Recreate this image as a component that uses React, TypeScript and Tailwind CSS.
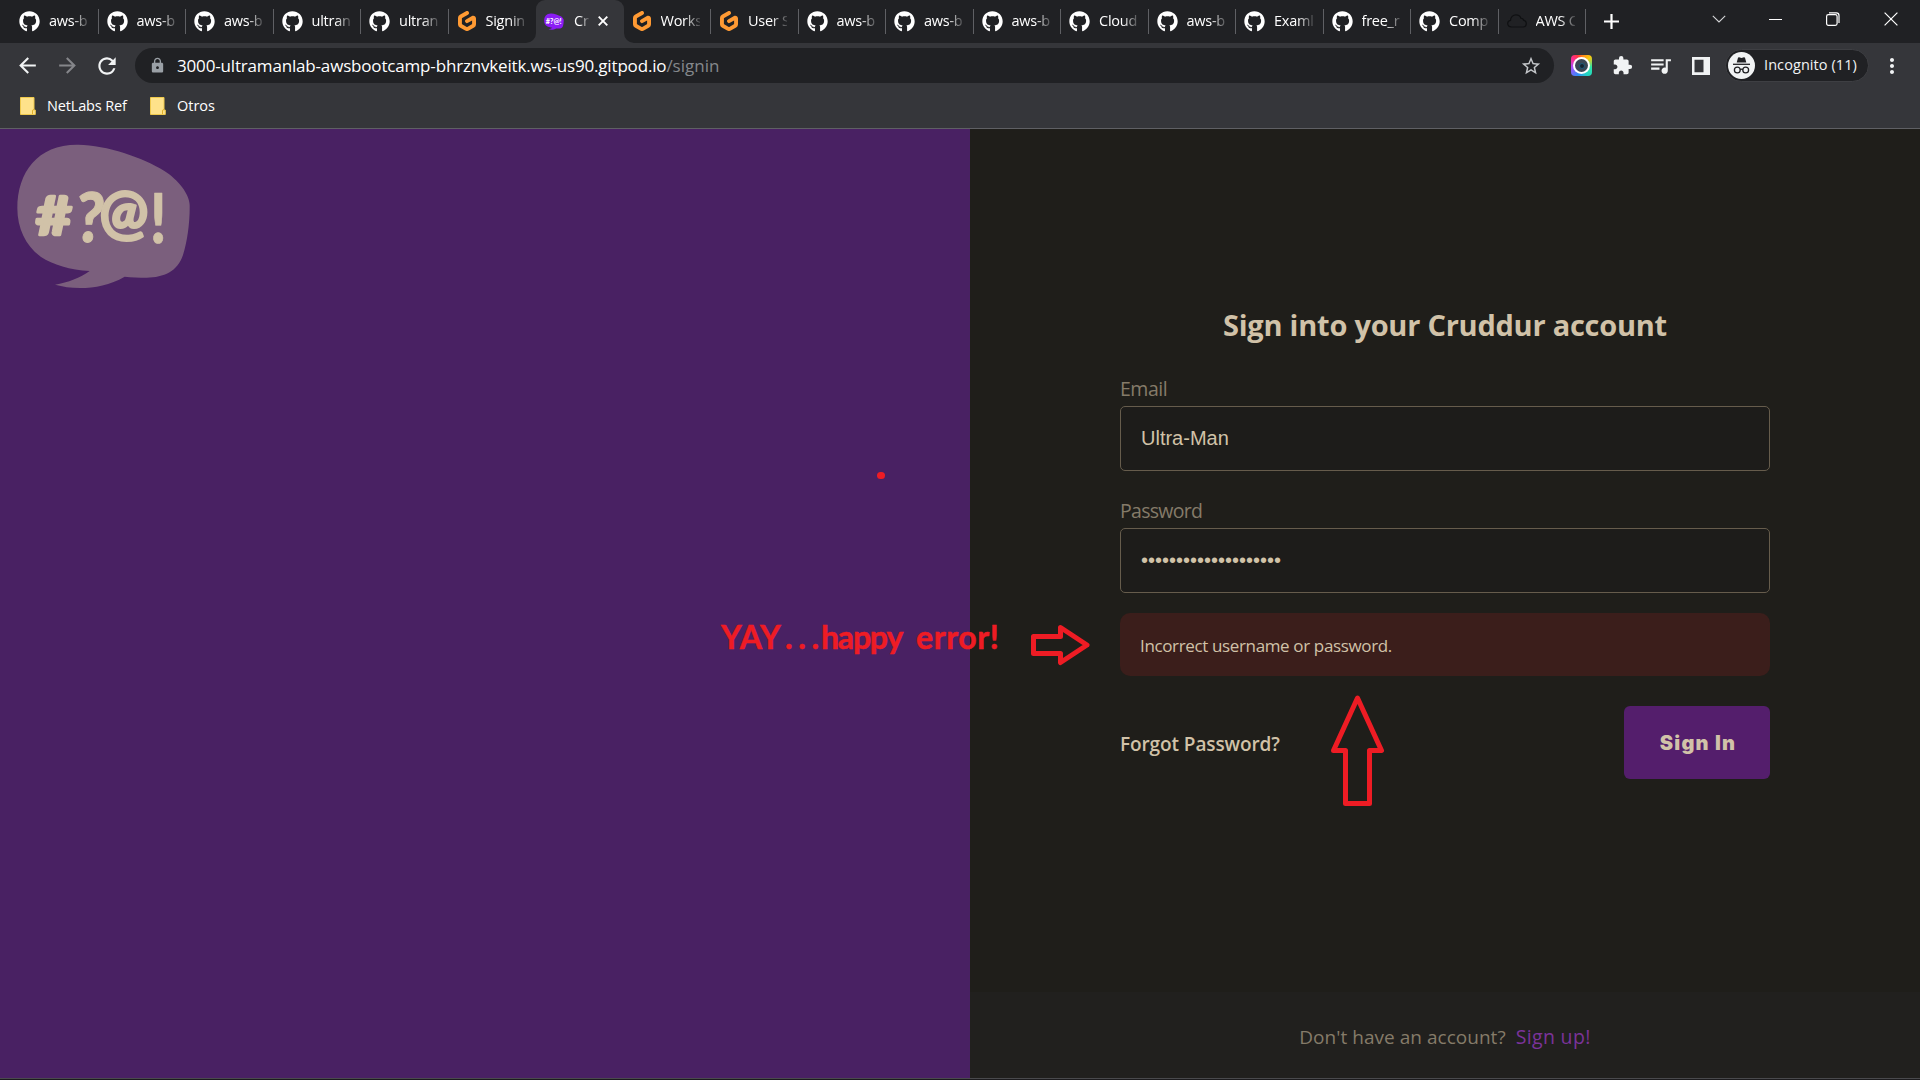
import { FaGithub } from "react-icons/fa";
import { SiGitpod } from "react-icons/si";
import {
  MdArrowBack,
  MdArrowForward,
  MdExtension,
  MdLock,
  MdMoreVert,
  MdQueueMusic,
  MdRefresh,
  MdStarBorder,
} from "react-icons/md";

type TabKind = "github" | "gitpod" | "cruddur" | "cloud";

const tabs: { kind: TabKind; title: string }[] = [
  { kind: "github", title: "aws-b" },
  { kind: "github", title: "aws-b" },
  { kind: "github", title: "aws-b" },
  { kind: "github", title: "ultran" },
  { kind: "github", title: "ultran" },
  { kind: "gitpod", title: "Signin" },
  { kind: "cruddur", title: "Cr" },
  { kind: "gitpod", title: "Works" },
  { kind: "gitpod", title: "User S" },
  { kind: "github", title: "aws-b" },
  { kind: "github", title: "aws-b" },
  { kind: "github", title: "aws-b" },
  { kind: "github", title: "Cloud" },
  { kind: "github", title: "aws-b" },
  { kind: "github", title: "Examl" },
  { kind: "github", title: "free_r" },
  { kind: "github", title: "Comp" },
  { kind: "cloud", title: "AWS C" },
];

const BUBBLE =
  "M235 59C320 60 430 98 492 137C535 164 569 208 569 240C570 290 562 350 549 390C532 440 492 457 440 458C415 458 395 457 374 455C330 480 285 489 240 489C212 489 188 485 165 479C205 473 240 458 269 438C210 434 160 420 122 395C78 364 52 310 52 250C52 140 115 57 235 59Z";

function CruddurLogo() {
  return (
    <svg viewBox="48 54 528 438" className="h-[146px] w-[176px]">
      <path d={BUBBLE} fill="#7b5f7d" />
      <g fill="#d1c2a8" stroke="#d1c2a8" strokeLinejoin="round" fontFamily="Lato, sans-serif" fontWeight="900">
        <text transform="translate(107 331) scale(1.18 1)" fontSize="158" strokeWidth="8">#</text>
        <text transform="translate(225 352) scale(0.88 1) skewX(-4)" fontSize="206" strokeWidth="3">?</text>
        <text transform="translate(298 327) scale(0.96 1)" fontSize="182" strokeWidth="6">@</text>
        <text transform="translate(450 353) scale(0.84 1)" fontSize="206" strokeWidth="2">!</text>
      </g>
    </svg>
  );
}

function TabIcon({ kind }: { kind: TabKind }) {
  if (kind === "github") return <FaGithub size={21} color="#fff" className="shrink-0" />;
  if (kind === "gitpod")
    return (
      <span className="flex w-5 shrink-0 justify-center">
        <SiGitpod size={20} color="#ff9a33" />
      </span>
    );
  if (kind === "cruddur")
    return (
      <svg viewBox="48 54 528 438" className="h-[17px] w-5 shrink-0">
        <path d={BUBBLE} fill="#8b1cf5" />
        <text x="95" y="335" fontSize="190" fontWeight="900" fill="#fff" fontFamily="Lato, sans-serif" textLength="420" lengthAdjust="spacingAndGlyphs">
          #?@!
        </text>
      </svg>
    );
  return (
    <svg viewBox="0 0 20 14" className="h-[14px] w-5 shrink-0" fill="none" stroke="#0f1012" strokeWidth="1.2">
      <path d="M4.5 13C2 13 .7 11.5.7 9.6.7 7.800 2 6.600 3.500 6.400 3.600 3.200 6 .8 9 .8c2.500 0 4.300 1.300 5 3.500 1.100-.2 2.300.5 2.500 1.900 1.700.3 2.800 1.600 2.800 3.300 0 2-1.400 3.500-3.300 3.500Z" />
    </svg>
  );
}

function Tab({ kind, title, divider }: { kind: TabKind; title: string; divider: boolean }) {
  return (
    <div className="relative flex h-[42px] w-[87.5px] shrink-0 items-center pl-[8px]">
      <TabIcon kind={kind} />
      <div className="ml-[9px] w-[39px] overflow-hidden whitespace-nowrap text-[14.5px] leading-[22px] tracking-[-0.25px] text-white [mask-image:linear-gradient(to_right,black_60%,transparent_108%)]">
        {title}
      </div>
      {divider && <span className="absolute right-0 top-[9px] h-[25px] w-px bg-[#5f6064]" />}
    </div>
  );
}

function ActiveTab() {
  return (
    <div className="relative flex h-[43px] w-[87.5px] shrink-0 items-center rounded-t-[9px] bg-[#35363a] pb-px pl-[8px]">
      <svg viewBox="0 0 10 10" className="absolute -left-[10px] bottom-0 size-[10px]">
        <path d="M10 0V10H0A10 10 0 0 0 10 0Z" fill="#35363a" />
      </svg>
      <svg viewBox="0 0 10 10" className="absolute -right-[10px] bottom-0 size-[10px]">
        <path d="M0 0V10H10A10 10 0 0 1 0 0Z" fill="#35363a" />
      </svg>
      <TabIcon kind="cruddur" />
      <div className="ml-[10px] w-[15px] overflow-hidden whitespace-nowrap text-[14.5px] leading-[22px] tracking-[-0.2px] text-white [mask-image:linear-gradient(to_right,black_40%,transparent_110%)]">
        Cr
      </div>
      <svg viewBox="0 0 10 10" className="ml-[9px] size-[10px] shrink-0" stroke="#fff" strokeWidth="1.9">
        <path d="M.7.7 9.300 9.300M9.300.7.7 9.300" />
      </svg>
    </div>
  );
}

function WindowControls() {
  return (
    <div className="flex h-[38px] items-center">
      <svg viewBox="0 0 14 8" className="h-2 w-[14px]" fill="none" stroke="#d5d6d8" strokeWidth="1.1">
        <path d="M.8.8 7 7 13.200.8" />
      </svg>
      <span className="ml-[43px] h-px w-[13px] bg-white" />
      <svg viewBox="0 0 14 14" className="ml-[44px] size-[14px]" fill="none" stroke="#fff" strokeWidth="1.2">
        <rect x=".6" y="2.600" width="10.500" height="10.700" rx="1.800" />
        <path d="M3 .9H10.300Q13 .9 13 3.600V11" />
      </svg>
      <svg viewBox="0 0 14 14" className="ml-[44px] size-[14px]" stroke="#fff" strokeWidth="1.2">
        <path d="M.6.6 13.400 13.400M13.400.6.6 13.400" />
      </svg>
    </div>
  );
}

function TabStrip() {
  return (
    <div className="flex h-[43px] bg-[#202124] pl-[11px]">
      {tabs.map((t, i) =>
        t.kind === "cruddur" ? (
          <ActiveTab key={i} />
        ) : (
          <Tab key={i} kind={t.kind} title={t.title} divider={i !== 5} />
        ),
      )}
      <svg viewBox="0 0 15 15" className="ml-[18px] mt-[14px] size-[15px] shrink-0" stroke="#fff" strokeWidth="2.200">
        <path d="M7.500 0V15M0 7.500H15" />
      </svg>
      <div className="ml-auto mr-[22px]">
        <WindowControls />
      </div>
    </div>
  );
}

function CameraIcon() {
  return (
    <div className="flex size-[21px] items-center justify-center rounded-[4px] bg-[conic-gradient(from_0deg,#ff7a1a,#f9c80e_45deg,#2ee6a8_100deg,#22d3c5_150deg,#2f8df5_200deg,#b04bff_260deg,#ff2d8a_310deg,#ff3b3b_340deg,#ff7a1a)]">
      <div className="flex size-[17px] items-center justify-center rounded-full bg-white">
        <div className="flex size-[13px] items-center justify-center rounded-full bg-[#3b4655]">
          <div className="size-[6px] rounded-full border border-[#1d5a7a] bg-[#18222e]" />
        </div>
      </div>
    </div>
  );
}

function IncognitoIcon() {
  return (
    <svg viewBox="0 0 27 27" className="size-[27px]">
      <circle cx="13.500" cy="13.500" r="13.500" fill="#f1f3f4" />
      <path d="M10 5.800Q10.300 5 11.100 5.200L13.500 5.900 15.900 5.200Q16.700 5 17 5.800L18.300 10.500H8.700Z" fill="#202124" />
      <path d="M5 12.300H22" stroke="#202124" strokeWidth="1.300" />
      <g fill="none" stroke="#202124" strokeWidth="1.300">
        <circle cx="9.300" cy="18" r="2.900" />
        <circle cx="17.700" cy="18" r="2.900" />
        <path d="M12.200 17.600Q13.500 16.800 14.800 17.600" />
      </g>
    </svg>
  );
}

function Toolbar() {
  return (
    <div className="flex h-[45px] items-center bg-[#35363a] pl-[15px] text-[#f1f3f4]">
      <MdArrowBack size={25} />
      <MdArrowForward size={25} color="#85868a" className="ml-[15px]" />
      <MdRefresh size={26} className="ml-[14px]" />
      <div className="ml-[15px] flex h-[35px] w-[1419px] items-center rounded-full bg-[#202124] pl-[14px] pr-[12px]">
        <MdLock size={17} color="#9aa0a6" />
        <div className="ml-[11px] flex whitespace-nowrap text-[17px] leading-6">
          <span className="tracking-[-0.17px] text-white">
            3000-ultramanlab-awsbootcamp-bhrznvkeitk.ws-us90.gitpod.io
          </span>
          <span className="text-[#85888c]">/signin</span>
        </div>
        <MdStarBorder size={22} color="#c4c7ca" className="ml-auto" />
      </div>
      <div className="ml-[17px]">
        <CameraIcon />
      </div>
      <MdExtension size={21} className="ml-[20px]" />
      <MdQueueMusic size={25} className="ml-[15px]" />
      <svg viewBox="0 0 18 18" className="ml-[19px] size-[18px]">
        <path fillRule="evenodd" d="M0 0H18V18H0ZM2.500 2.800V15.200H11.500V2.800Z" fill="#f1f3f4" />
      </svg>
      <div className="ml-[15px] flex h-[33px] w-[144px] items-center rounded-full border border-[#3e3f43] bg-[#202124] pl-[2px]">
        <IncognitoIcon />
        <span className="-mt-px ml-[9px] whitespace-nowrap text-[14.5px] leading-5 tracking-[0.08px]">Incognito (11)</span>
      </div>
      <MdMoreVert size={24} className="ml-[11px]" />
    </div>
  );
}

function Folder({ label, className }: { label: string; className: string }) {
  return (
    <div className="flex items-center">
      <svg viewBox="0 0 16 18" className="mt-px h-[18px] w-4">
        <path d="M.5.5H14V13H15.300V17.500H.5Z" fill="#fee28a" stroke="#efc94c" />
        <path d="M12.500 17V14Q12.500 12.500 14 12.500" fill="none" stroke="#dfae2a" />
      </svg>
      <span className={className}>{label}</span>
    </div>
  );
}

function Bookmarks() {
  return (
    <div className="flex h-[41px] items-center gap-[22px] border-b border-[#5f6064] bg-[#35363a] pb-[5px] pl-5 text-[14.5px] leading-5 text-white">
      <Folder label="NetLabs Ref" className="ml-[11px] w-[81px] whitespace-nowrap tracking-[-0.15px]" />
      <Folder label="Otros" className="ml-[11px]" />
    </div>
  );
}

function Field({ label, children, labelClass }: { label: string; children: string; labelClass: string }) {
  return (
    <div className="flex flex-col gap-[3px]">
      <label className={labelClass}>{label}</label>
      <div className="flex h-[65px] items-center rounded-[5px] border border-[#665c4c] bg-[#1d1c1a] px-5 pb-[1px] font-['Liberation_Sans',sans-serif] text-[20px] text-[#d1c2a8]">
        {children}
      </div>
    </div>
  );
}

function SignIn() {
  return (
    <div className="flex flex-1 flex-col bg-[#1f1e1a]">
      <div className="mx-auto flex w-[650px] flex-1 flex-col pt-[176px]">
        <h1 className="h-10 text-center text-[29px] font-bold leading-10 tracking-[-0.24px] text-[#d1c2a8]">
          Sign into your Cruddur account
        </h1>
        <div className="mt-[30px] flex flex-col gap-[26px]">
          <Field label="Email" labelClass="h-7 text-[19.5px] leading-7 tracking-[-0.5px] text-[#857b69]">
            Ultra-Man
          </Field>
          <Field label="Password" labelClass="h-7 text-[19.5px] leading-7 tracking-[-0.7px] text-[#857b69]">
            ••••••••••••••••••••
          </Field>
        </div>
        <div className="mt-5 flex h-[63px] items-center rounded-[10px] bg-[#3b1e1b] px-5 pt-[2px] text-[17px] tracking-[-0.36px] text-[#d1c2a8]">
          Incorrect username or password.
        </div>
        <div className="mt-[30px] flex h-[73px] items-center justify-between">
          <a className="pt-[2px] text-[19px] font-semibold leading-7 tracking-[-0.1px] text-[#d1c2a8]">Forgot Password?</a>
          <button className="flex h-[73px] w-[146px] items-center justify-center rounded-[6px] bg-[#541e6c] pl-[2px] font-['Inter',sans-serif] text-[20px] font-black tracking-[1.2px] text-[#d1c2a8]">
            Sign In
          </button>
        </div>
      </div>
      <div className="flex h-[86px] items-center justify-center bg-[#21201e] pt-[4px] text-[19px] leading-7">
        <span className="tracking-[0.03px] text-[#857b69]">Don't have an account?</span>
        <a className="ml-[10px] font-medium text-[19.5px] tracking-[0.35px] text-[#7b3399]">Sign up!</a>
      </div>
    </div>
  );
}

function Annotations() {
  return (
    <div className="pointer-events-none absolute inset-0 text-[#ee1c24]">
      <div className="absolute left-[877px] top-[472px] h-[7px] w-[8px] rounded-full bg-[#ee1c24]" />
      <div className="absolute left-[721px] top-[617px] flex whitespace-nowrap font-['Lato',sans-serif] text-[32px] font-bold leading-10 [-webkit-text-stroke:0.5px_#ee1c24]">
        <span className="w-[64px] tracking-[0.4px]">YAY</span>
        <span className="w-[36px] tracking-[5.6px]">...</span>
        <span className="w-[95px] tracking-[-1.2px]">happy</span>
        <span className="tracking-[0.6px]">error!</span>
      </div>
      <svg viewBox="0 0 66 46" className="absolute left-[1028px] top-[622px] h-[46px] w-[66px]" fill="none" stroke="#ee1c24" strokeWidth="5" strokeLinejoin="round">
        <path d="M5.500 14.500H32.500V5.500L59 23 32.500 40.500V31.500H5.500Z" />
      </svg>
      <svg viewBox="0 0 60 116" className="absolute left-[1328px] top-[693px] h-[116px] w-[60px]" fill="none" stroke="#ee1c24" strokeWidth="5" strokeLinejoin="round">
        <path d="M29.500 5 53.500 57.500H41.500V110.500H17.500V57.500H5.500Z" />
      </svg>
    </div>
  );
}

export default function App() {
  return (
    <div className="relative flex h-[1080px] w-[1920px] flex-col overflow-hidden bg-[#1c1b1e] font-['Open_Sans','Noto_Sans',sans-serif]">
      <TabStrip />
      <Toolbar />
      <Bookmarks />
      <main className="flex h-[949px]">
        <div className="w-[970px] bg-[#492163] pl-4 pt-[14px]">
          <CruddurLogo />
        </div>
        <SignIn />
      </main>
      <div className="h-px bg-[#4a4a4d]" />
      <Annotations />
    </div>
  );
}
